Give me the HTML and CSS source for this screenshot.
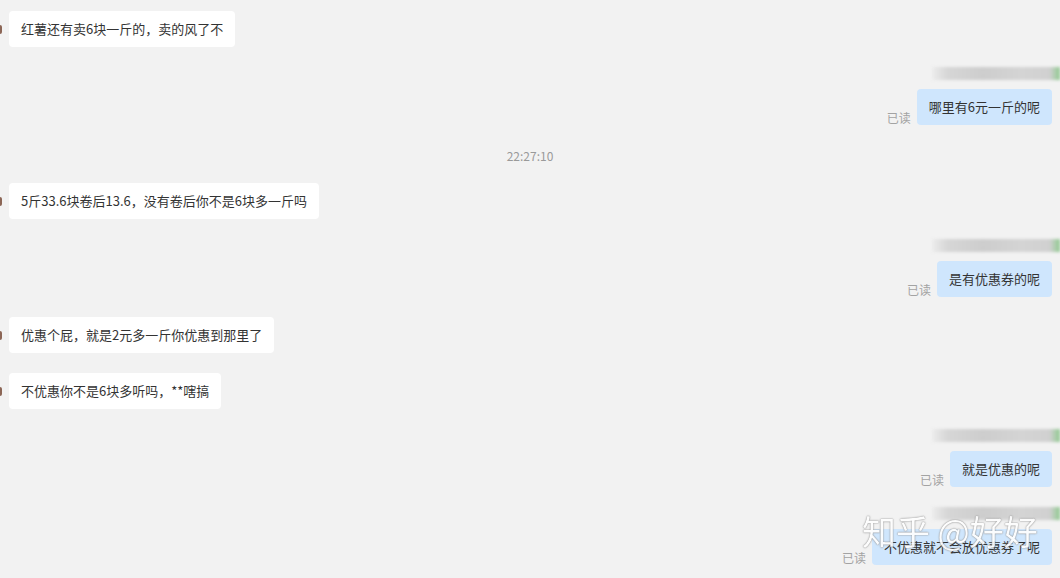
FILE: index.html
```html
<!DOCTYPE html>
<html lang="zh-CN">
<head>
    <meta charset="UTF-8">
    <title>聊天记录</title>
    <link rel="stylesheet" href="styles.css">
</head>
<body>
    <div class="chat">
        <!-- incoming -->
        <div class="msg in">
            <span class="avatar"></span>
            <div class="bubble">红薯还有卖6块一斤的，卖的风了不</div>
        </div>

        <div class="msg out">
            <div class="name"></div>
            <div class="line">
                <span class="read">已读</span>
                <div class="bubble">哪里有6元一斤的呢</div>
            </div>
        </div>

        <div class="time">22:27:10</div>

        <div class="msg in">
            <span class="avatar"></span>
            <div class="bubble">5斤33.6块卷后13.6，没有卷后你不是6块多一斤吗</div>
        </div>

        <div class="msg out">
            <div class="name"></div>
            <div class="line">
                <span class="read">已读</span>
                <div class="bubble">是有优惠券的呢</div>
            </div>
        </div>

        <div class="msg in">
            <span class="avatar"></span>
            <div class="bubble">优惠个屁，就是2元多一斤你优惠到那里了</div>
        </div>

        <div class="msg in">
            <span class="avatar"></span>
            <div class="bubble">不优惠你不是6块多听吗，**嗐搞</div>
        </div>

        <div class="msg out">
            <div class="name"></div>
            <div class="line">
                <span class="read">已读</span>
                <div class="bubble">就是优惠的呢</div>
            </div>
        </div>

        <div class="msg out">
            <div class="name"></div>
            <div class="line">
                <span class="read">已读</span>
                <div class="bubble">不优惠就不会放优惠券了呢</div>
            </div>
        </div>
    </div>

    <div class="watermark">知乎 @好好</div>
</body>
</html>
```

FILE: styles.css
```css
body {
    margin: 0;
    height: 578px;
    overflow: hidden;
    position: relative;
    background-color: #f2f2f2;
    font-family: "Noto Sans CJK SC", "Liberation Sans", sans-serif;
    color: #333;
}
.chat {
    display: flex;
    flex-direction: column;
    padding-top: 11px;
}
.msg + .msg,
.time + .msg {
    margin-top: 20px;
}
.bubble {
    font-size: 13px;
    line-height: 18px;
    padding: 9px 12px;
    border-radius: 4px;
    white-space: nowrap;
}
.in {
    display: flex;
    align-items: center;
}
.in .bubble {
    background-color: #fff;
}
.avatar {
    width: 2px;
    height: 9px;
    margin-right: 7px;
    border-radius: 0 2px 2px 0;
    background-color: #8c6656;
}
.out {
    display: flex;
    flex-direction: column;
    align-items: flex-end;
}
.name {
    width: 128px;
    height: 13px;
    margin-bottom: 9px;
    background: linear-gradient(90deg, #ececec 0%, #d6d6d6 12%, #cdcdcd 40%, #d4d4d4 70%, #d0d0d0 92%, #8fc98f 100%);
    filter: blur(1.5px);
}
.line {
    display: flex;
    align-items: flex-end;
    padding-right: 8px;
}
.out .bubble {
    background-color: #cfe6fd;
}
.read {
    font-size: 12px;
    line-height: 16px;
    color: #a3a3a3;
    margin-right: 6px;
    margin-bottom: -1px;
}
.time {
    margin-top: 24px;
    text-align: center;
    font-size: 12px;
    line-height: 14px;
    color: #9a9a9a;
}
.watermark {
    position: absolute;
    left: 862px;
    top: 509px;
    font-size: 34px;
    line-height: 44px;
    color: #fff;
    white-space: nowrap;
    text-shadow: 0 0 1px #777, 0 0 2px #999;
    opacity: 0.9;
}
```
